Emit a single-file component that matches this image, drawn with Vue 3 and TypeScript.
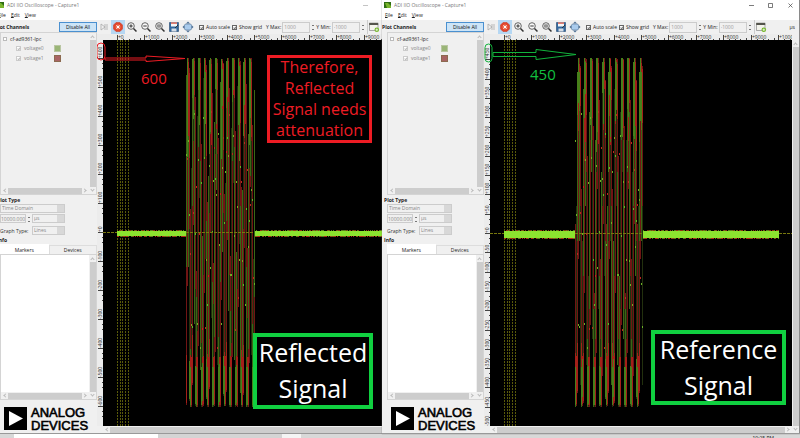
<script setup lang="ts">
interface Tick { at: number; label: string }
interface Bar { x: number; y: number; h: number; c: string }
interface Scope {
  id: string
  zero: number
  band: number
  start: number
  end: number
  peak: number
  period: number
  tail: number
  xTicks: Tick[]
  yTicks: Tick[]
  bars: Bar[]
  fringe: Bar[]
}

const cursors = [20, 23, 25, 28, 31]
const TOP = 24
const BOTTOM = 373

// Repeatable noise in 0..1
function noise(n: number): number {
  const v = Math.sin(n * 127.1 + 11.7) * 43758.5453
  return v - Math.floor(v)
}

// Vertical extent of the sine inside one pixel column
function column(x: number, peak: number, period: number, spread: number): [number, number] {
  const mid = (TOP + BOTTOM) / 2
  const amp = (BOTTOM - TOP) / 2
  let lo = BOTTOM
  let hi = TOP
  for (let i = -4; i <= 4; i++) {
    const y = mid - amp * Math.cos(((x + (i / 4) * spread - peak) / period) * Math.PI * 2)
    lo = Math.min(lo, y)
    hi = Math.max(hi, y)
  }
  return [Math.round(lo), Math.round(hi)]
}

function burst(start: number, end: number, peak: number, period: number): Bar[] {
  const out: Bar[] = []
  for (let x = start; x <= end; x++) {
    const [r0, r1] = column(x, peak + 1, period, 0.7)
    out.push({ x, y: r0, h: r1 - r0, c: '#701514' })
    const [g0, g1] = column(x, peak, period, 0.6)
    out.push({ x, y: g0, h: g1 - g0, c: x % 2 ? '#3a6615' : '#22300e' })
    if (r0 < 50) out.push({ x, y: r0 + Math.round(noise(x) * 6), h: 26 + Math.round(noise(x + 3) * 60), c: '#a32019' })
    if (g0 < 40) out.push({ x, y: g0, h: 30 + Math.round(noise(x + 5) * 70), c: '#47801a' })
    if (r1 > 350) out.push({ x, y: r1 - 50, h: 48, c: '#a32019' })
    if (g1 > 360) out.push({ x, y: g1 - 40, h: 38, c: '#47801a' })
    out.push({ x, y: Math.round(TOP + 50 + noise(x + 9) * 240), h: 2, c: x % 3 ? '#6ab026' : '#b9281f' })
  }
  return out
}

function edgeNoise(ranges: number[][], y: number, h: number): Bar[] {
  const out: Bar[] = []
  for (const [a, b] of ranges) {
    for (let x = a; x < b; x++) {
      const n = noise(x + y)
      if (n > 0.35) out.push({ x, y: y - 1, h: 1, c: n > 0.7 ? '#8c3512' : '#5c7d1c' })
      if (n < 0.7) out.push({ x, y: y + h, h: 1, c: n < 0.4 ? '#b02c18' : '#5c7d1c' })
    }
  }
  return out
}

function makeScope(
  id: string, zero: number, band: number, start: number, end: number,
  peak: number, period: number, tail: number, stepY: number, unit: number,
): Scope {
  const xTicks: Tick[] = []
  for (let i = 0; i <= 10; i++) xTicks.push({ at: Math.round(20 + i * 27.4), label: i ? `+${i * 1000}` : '+0' })
  const yTicks: Tick[] = []
  for (let i = -10; i <= 10; i++) {
    const at = Math.round(zero - i * stepY)
    if (at > 14 && at < 394) yTicks.push({ at, label: i < 0 ? `${i * unit}` : `+${i * unit}` })
  }
  return {
    id, zero, band, start, end, peak, period, tail, xTicks, yTicks,
    bars: burst(start, end, peak, period),
    fringe: edgeNoise([[20, start], [end + 1, tail]], Math.round(zero - band / 2), band),
  }
}

const scopes: Scope[] = [
  makeScope('left', 199, 5, 89, 157, 90, 5.68, 294, 29, 100),
  makeScope('right', 200, 7, 91, 158, 94, 6.2, 295, 19.3, 50),
]
</script>

<template>
  <main class="desk">
    <div class="panes">
      <div v-for="s in scopes" :key="s.id" class="pane" :class="s.id">
        <section class="window" aria-label="ADI IIO Oscilloscope">
          <header class="title">
            <svg class="app" viewBox="0 0 8 6"><path d="M0 0h7v6H0z" fill="#2f6d12" /><path d="M1 1h3l3 3v2H3z" fill="#79b52c" /></svg>
            <span class="name">ADI IIO Oscilloscope - Capture1</span>
            <svg class="ctl" viewBox="0 0 48 8"><path d="M2 4.500h5M21.500 2.500h4v4h-4zM41.500 2.500l4 4M45.500 2.500l-4 4" fill="none" stroke="#444" stroke-width=".7" /></svg>
          </header>
          <nav class="menu">
            <button type="button"><u>F</u>ile</button>
            <button type="button"><u>E</u>dit</button>
            <button type="button"><u>V</u>iew</button>
          </nav>
          <div class="body">
            <aside class="side">
              <div class="chan-head">
                <strong>Plot Channels</strong>
                <button type="button" class="disable">Disable All</button>
              </div>
              <div class="tree">
                <div class="tree-main">
                  <ul>
                    <li class="root"><i class="fold"></i>cf-ad9361-lpc</li>
                    <li v-for="n in 2" :key="n" class="chan">
                      <label><input type="checkbox" checked disabled />voltage{{ n - 1 }}</label>
                      <i class="swatch" :class="'c' + n"></i>
                    </li>
                  </ul>
                  <div class="hbar"><i></i><b></b><i class="r"></i></div>
                </div>
                <div class="vbar"><i></i><b></b><i class="d"></i></div>
              </div>
              <strong class="head">Plot Type</strong>
              <div class="opts">
                <select disabled aria-label="Plot type" class="wide"><option>Time Domain</option></select>
                <div class="row">
                  <input class="num" type="text" value="10000.000" disabled aria-label="Duration" />
                  <i class="spin"></i>
                  <select disabled aria-label="Unit" class="mid"><option>µs</option></select>
                </div>
                <div class="row graph">
                  <label :for="'graph-' + s.id">Graph Type:</label>
                  <select :id="'graph-' + s.id" disabled class="mid"><option>Lines</option></select>
                </div>
              </div>
              <strong class="head">Info</strong>
              <div class="tabs">
                <button type="button" class="on">Markers</button>
                <button type="button">Devices</button>
              </div>
              <div class="notes">
                <div class="notes-main"><div class="blank"></div><div class="hbar"><i></i><b></b><i class="r"></i></div></div>
                <div class="vbar"><i></i><b></b><i class="d"></i></div>
              </div>
              <div class="logo">
                <svg viewBox="0 0 23 23"><path d="M0 0h23v23H0z" fill="#000" /><path d="M5 4v15l14-7.500z" fill="#fff" /></svg>
                <span>ANALOG<br />DEVICES</span>
              </div>
            </aside>

            <div class="work">
              <div class="tools">
                <button type="button" aria-label="Single shot"><svg viewBox="0 0 12 12"><path d="M3 3v6l4-3zM7 3v6M9 3v6" fill="none" stroke="#aaa" stroke-width=".8" /></svg></button>
                <button type="button" class="stop" aria-label="Stop"><svg viewBox="0 0 12 12"><path d="M4 1.500h4L10.500 4v4L8 10.500H4L1.500 8V4z" fill="#e2452b" stroke="#c7341f" stroke-width=".5" /><circle cx="6" cy="6" r="2.500" fill="#f07b60" /><path d="M4.500 4.500l3 3M7.500 4.500l-3 3" stroke="#fff" stroke-width="1" /></svg></button>
                <button v-for="z in ['in', 'out', 'fit']" :key="z" type="button" :aria-label="'Zoom ' + z">
                  <svg viewBox="0 0 12 12">
                    <circle cx="5" cy="5" r="3.300" fill="#f7f7f7" stroke="#555" stroke-width=".9" />
                    <path d="M7.500 7.500l3 3" stroke="#333" stroke-width="1.500" />
                    <path v-if="z === 'in'" d="M3.300 5h3.400M5 3.300v3.400" stroke="#222" stroke-width=".9" />
                    <path v-else-if="z === 'out'" d="M3.300 5h3.400" stroke="#222" stroke-width=".9" />
                    <path v-else d="M3.500 3.700h3v2.600h-3z" fill="#999" stroke="#666" stroke-width=".5" />
                  </svg>
                </button>
                <button type="button" aria-label="Save"><svg viewBox="0 0 12 12"><path d="M1.500 1.500h9v9h-9z" fill="#33699f" stroke="#24476e" stroke-width=".6" /><path d="M3 1.500h6v4H3z" fill="#f5f5f5" /><path d="M3 1.500h6v1.200H3z" fill="#d94b38" /><path d="M3.500 7.500h5v3h-5z" fill="#d7dee6" /><path d="M7 7l3-3" stroke="#222" stroke-width=".8" /></svg></button>
                <button type="button" aria-label="Fullscreen"><svg viewBox="0 0 12 12"><path d="M6 .500l2 2H4zM6 11.500l2-2H4zM.500 6l2-2v4zM11.500 6l-2-2v4z" fill="#4d6f94" /><rect x="2.500" y="3" width="7" height="6" rx="1.500" fill="#a9cbed" stroke="#5c7c9d" stroke-width=".7" /></svg></button>
                <label class="auto"><input type="checkbox" checked />Auto scale</label>
                <label class="grid"><input type="checkbox" checked />Show grid</label>
                <label class="lim" :for="'max-' + s.id">Y Max:</label>
                <input :id="'max-' + s.id" class="limit" type="text" value="1000" disabled />
                <i class="spin"></i>
                <label :for="'min-' + s.id">Y Min:</label>
                <input :id="'min-' + s.id" class="limit" type="text" value="-1000" disabled />
                <i class="spin"></i>
                <button type="button" class="new" aria-label="New plot"><svg viewBox="0 0 12 12"><path d="M1.500 2.500h8.500v7H1.500z" fill="#f3f3ec" stroke="#777" stroke-width=".6" /><path d="M1.200 1.800h9v2.200h-9z" fill="#54544c" /><circle cx="8.800" cy="8.800" r="2.300" fill="#74b72b" /><path d="M7.500 8.800h2.600M8.800 7.500v2.600" stroke="#fff" stroke-width=".7" /></svg></button>
                <span class="unit">µs</span>
              </div>
              <div class="scope">
                <div class="screen">
                  <svg class="trace" role="img" aria-label="Waveform">
                    <rect width="100%" height="100%" />
                    <line v-for="c in cursors" :key="c" :x1="c + 0.5" :x2="c + 0.5" y1="6" y2="100%" class="cursor" />
                    <rect v-for="(b, i) in s.fringe" :key="'f' + i" :x="b.x" :y="b.y" width="1" :height="b.h" :fill="b.c" />
                    <rect v-for="(b, i) in s.bars" :key="'b' + i" :x="b.x" :y="b.y" width="1" :height="b.h" :fill="b.c" />
                    <rect x="20" :y="Math.round(s.zero - s.band / 2)" :width="s.start - 20" :height="s.band" class="signal" />
                    <rect :x="s.end + 1" :y="Math.round(s.zero - s.band / 2)" :width="s.tail - s.end - 1" :height="s.band" class="signal" />
                    <line x1="6" :x2="20" :y1="s.zero - 0.5" :y2="s.zero - 0.5" class="axis" />
                    <line :x1="s.start" :x2="s.end" :y1="s.zero - 0.5" :y2="s.zero - 0.5" class="axis" />
                    <line :x1="s.tail" x2="100%" :y1="s.zero - 0.5" :y2="s.zero - 0.5" class="axis" />
                    <rect width="100%" height="6" class="rule" />
                    <rect width="6" height="100%" class="rule" />
                    <g class="scale">
                      <template v-for="t in s.xTicks" :key="'x' + t.at">
                        <path :d="`M${t.at + 0.5} 1v5M${t.at + 6.5} 5v1M${t.at + 12.5} 5v1M${t.at + 17.5} 5v1M${t.at + 23.5} 4v2`" />
                        <text :x="t.at + 1" y="5">{{ t.label }}</text>
                      </template>
                      <template v-for="t in s.yTicks" :key="'y' + t.at">
                        <path :d="`M1 ${t.at - 0.5}h5M5 ${t.at + 4.5}h1M5 ${t.at + 9.5}h1`" />
                        <text :transform="`translate(5 ${t.at - 1}) rotate(-90)`">{{ t.label }}</text>
                      </template>
                    </g>
                  </svg>
                  <div class="hbar"><i></i><b></b><i class="r"></i></div>
                  <svg v-if="s.id === 'left'" class="marks red">
                    <rect x="0" y="9" width="8" height="17" rx="4" />
                    <path d="M8 24h41v-2l39 2.500-39 3V26H8z" />
                  </svg>
                  <svg v-else class="marks green">
                    <rect x="1" y="10" width="7" height="18" rx="3.500" />
                    <path d="M9 18.500h43v-3l40 5-40 5v-3H9z" />
                  </svg>
                  <p class="value">{{ s.id === 'left' ? '600' : '450' }}</p>
                  <p v-if="s.id === 'left'" class="verdict"><span>Therefore,<br />Reflected<br />Signal needs<br />attenuation</span></p>
                  <p class="caption"><span>{{ s.id === 'left' ? 'Reflected' : 'Reference' }}<br />Signal</span></p>
                </div>
                <div class="vbar"><i></i><b></b><i class="d"></i></div>
              </div>
            </div>
          </div>
        </section>
      </div>
    </div>
    <footer class="taskbar"><i class="t1"></i><i class="t2"></i><i class="t3"></i><time>10:25 PM</time></footer>
  </main>
</template>

<style>
body { margin: 0; overflow: hidden; }
</style>

<style scoped>
* { box-sizing: border-box; }
.desk {
  display: flex;
  flex-direction: column;
  height: 100vh;
  font: 5px/8px "Open Sans", "Noto Sans", sans-serif;
  color: #222;
  background: #f0f0f0;
}
button, input, select { font: inherit; color: inherit; margin: 0; padding: 0; border: 0; background: none; appearance: none; border-radius: 0; }
p, ul { margin: 0; padding: 0; list-style: none; }
i, b { display: block; }
.panes { flex: 1; min-height: 0; display: grid; grid-template-columns: 382fr 418fr; }
.pane { display: flex; min-width: 0; overflow: hidden; border-bottom: 1px solid #999; }
.window { flex: 1; min-width: 0; display: flex; flex-direction: column; background: #f0f0f0; }
.left .window { margin-left: -5px; margin-right: -31px; }
.right { box-shadow: 0 0 1px #777; position: relative; }
.right .window { border-right: 1px solid #8a8a8a; }
.title { height: 10px; display: flex; align-items: center; gap: 2px; padding: 0 4px 0 2px; background: #fff; color: #777; }
.app { width: 8px; height: 6px; }
.name { flex: 1; }
.ctl { width: 48px; height: 8px; }
.left .ctl path { stroke: #aaa; }
.menu { height: 10px; display: flex; align-items: center; gap: 5px; padding-left: 3px; background: #fff; }
.menu u { text-decoration-thickness: 1px; text-underline-offset: 0; }
.body { flex: 1; min-height: 0; display: flex; }

.side { width: 102px; flex: none; display: flex; flex-direction: column; }
.chan-head { height: 12px; display: flex; justify-content: space-between; align-items: flex-end; }
.chan-head strong { line-height: 10px; }
.disable { width: 38px; height: 10px; border: 1px solid #4a90d0; background: #cce4f7; color: #111; }
.tree, .notes { display: flex; border: 1px solid #d4d4d4; margin-left: 5px; }
.tree { height: 163px; }
.tree-main, .notes-main { flex: 1; min-width: 0; display: flex; flex-direction: column; }
.tree ul { flex: 1; padding: 1px 2px; }
.root { display: flex; align-items: center; gap: 3px; height: 9px; }
.fold { width: 4px; height: 4px; border: 1px solid #bbb; background: #fff; }
.chan { display: flex; align-items: center; justify-content: space-between; height: 10px; padding: 0 26px 0 13px; color: #888; }
.chan label { display: flex; align-items: center; gap: 3px; }
input[type="checkbox"] { width: 5px; height: 5px; border: 1px solid #666; background: #fff; position: relative; }
input[type="checkbox"]::after { content: ""; position: absolute; left: 1px; top: 0; width: 1px; height: 2px; border: solid #777; border-width: 0 1px 1px 0; transform: rotate(40deg); }
input[type="checkbox"]:disabled { border-color: #ccc; }
input[type="checkbox"]:disabled::after { border-color: #bbb; }
.swatch { width: 7px; height: 7px; border: 1px solid #b9c6a2; background: #9ab577; }
.c2 { border-color: #8c6a50; background: #a86464; }
.hbar { display: flex; align-items: center; height: 7px; flex: none; background: #f0f0f0; }
.hbar i, .vbar i { width: 7px; height: 7px; flex: none; position: relative; }
.hbar i::after, .vbar i::after { content: ""; position: absolute; left: 3px; top: 2px; width: 2px; height: 2px; border: solid #bbb; border-width: 1px 0 0 1px; transform: rotate(-45deg); }
.hbar .r::after { transform: rotate(135deg); left: 1px; }
.vbar i::after { transform: rotate(45deg); left: 2px; top: 3px; }
.vbar .d::after { transform: rotate(225deg); top: 1px; }
.hbar b { flex: 1; height: 6px; background: #cdcdcd; }
.vbar { width: 7px; flex: none; display: flex; flex-direction: column; align-items: center; background: #f0f0f0; }
.vbar b { flex: 1; width: 6px; background: #cdcdcd; }
.head { padding: 1px 0 0 2px; height: 9px; line-height: 8px; }
.opts { padding-left: 5px; color: #888; }
.opts select { height: 9px; padding-left: 1px; border: 1px solid #ccc; background: linear-gradient(#d8d8d8, #d8d8d8) right / 7px 100% no-repeat #f0f0f0; line-height: 7px; opacity: 1; }
.wide { display: block; width: 65px; }
.mid { width: 33px; }
.row { display: flex; align-items: center; margin-top: 1px; }
.num { width: 26px; height: 9px; border: 1px solid #ccc; color: #888; }
.spin { width: 6px; height: 8px; position: relative; }
.spin::before, .spin::after { content: ""; position: absolute; left: 2px; width: 2px; height: 1px; background: #777; }
.spin::before { top: 2px; }
.spin::after { top: 6px; }
.graph { margin-top: 3px; }
.graph label { width: 32px; color: #333; white-space: nowrap; }
.tabs { display: flex; margin-left: 5px; height: 10px; align-items: flex-end; }
.tabs button { flex: 1; height: 9px; border: 1px solid #ddd; border-bottom: 0; }
.tabs .on { height: 10px; background: #fff; border-color: #fff; }
.notes { flex: 1; min-height: 0; }
.blank { flex: 1; background: #fff; }
.logo { height: 33px; flex: none; display: flex; align-items: center; gap: 4px; padding: 4px 0 0 9px; font: 13px/13px "Liberation Sans", Arial, sans-serif; color: #000; -webkit-text-stroke: 0.6px #000; }
.logo svg { width: 23px; height: 23px; flex: none; }

.work { flex: 1; min-width: 0; display: flex; flex-direction: column; }
.tools { height: 14px; flex: none; display: flex; align-items: center; white-space: nowrap; }
.tools button { width: 14px; height: 14px; display: grid; place-items: center; flex: none; }
.tools button svg { width: 12px; height: 12px; }
.tools .stop { background: #b5d7f3; }
.tools label { display: flex; align-items: center; gap: 1px; }
.tools .auto { width: 33px; margin-left: 4px; gap: 2px; }
.tools .grid { width: 34px; gap: 2px; }
.tools .limit { width: 28px; height: 11px; border: 1px solid #ccc; padding-left: 1px; color: #999; margin-left: 1px; }
.tools .new { margin-left: 1px; border-left: 1px solid #ccc; }
.unit { margin-left: auto; padding-right: 4px; }
.scope { flex: 1; min-height: 0; display: flex; }
.screen { flex: 1; min-width: 0; position: relative; display: flex; flex-direction: column; overflow: hidden; }
.trace { flex: 1; min-height: 0; width: 100%; display: block; }
.scope .vbar { padding-top: 6px; }
.cursor { stroke: #5a5a0a; stroke-dasharray: 2 1; }
.axis { stroke: #77770e; stroke-dasharray: 3 1; }
.signal { fill: #8ce32f; }
.rule { fill: #ececec; }
.scale path { stroke: #444; fill: none; }
.scale text { fill: #333; font-size: 5px; }
.screen > .hbar { padding-left: 6px; }
.marks { position: absolute; left: 0; top: 0; width: 100px; height: 40px; fill: none; stroke-width: 1; overflow: visible; }
.red { stroke: #ed1c24; }
.green { stroke: #12b33c; }
.value { position: absolute; left: 46px; top: 30px; font-size: 15px; line-height: 20px; color: #12c040; }
.left .value { left: 44px; top: 34px; color: #ed1c24; }
.verdict, .caption { position: absolute; display: grid; place-content: center; background: #000; text-align: center; white-space: nowrap; }
.verdict { left: 170px; top: 21px; width: 105px; height: 88px; border: 3px solid #ed1c24; color: #ed1c24; font-size: 16px; line-height: 21px; }
.caption { left: 167px; top: 296px; width: 135px; height: 75px; border: 4px solid #10d040; color: #fff; font-size: 25px; line-height: 36px; padding-bottom: 2px; }
.left .caption { left: 156px; top: 299px; width: 120px; height: 76px; }
.taskbar { height: 4px; flex: none; overflow: hidden; display: flex; background: #d8d8d8; padding-left: 14px; }
.taskbar i { height: 4px; background: #fff; }
.t1 { width: 144px; }
.taskbar .t2 { width: 124px; background: #d4d4d4; }
.taskbar .t3 { width: 19px; background: #f4f4f4; }
.taskbar time { margin-left: auto; padding-right: 26px; }
</style>
